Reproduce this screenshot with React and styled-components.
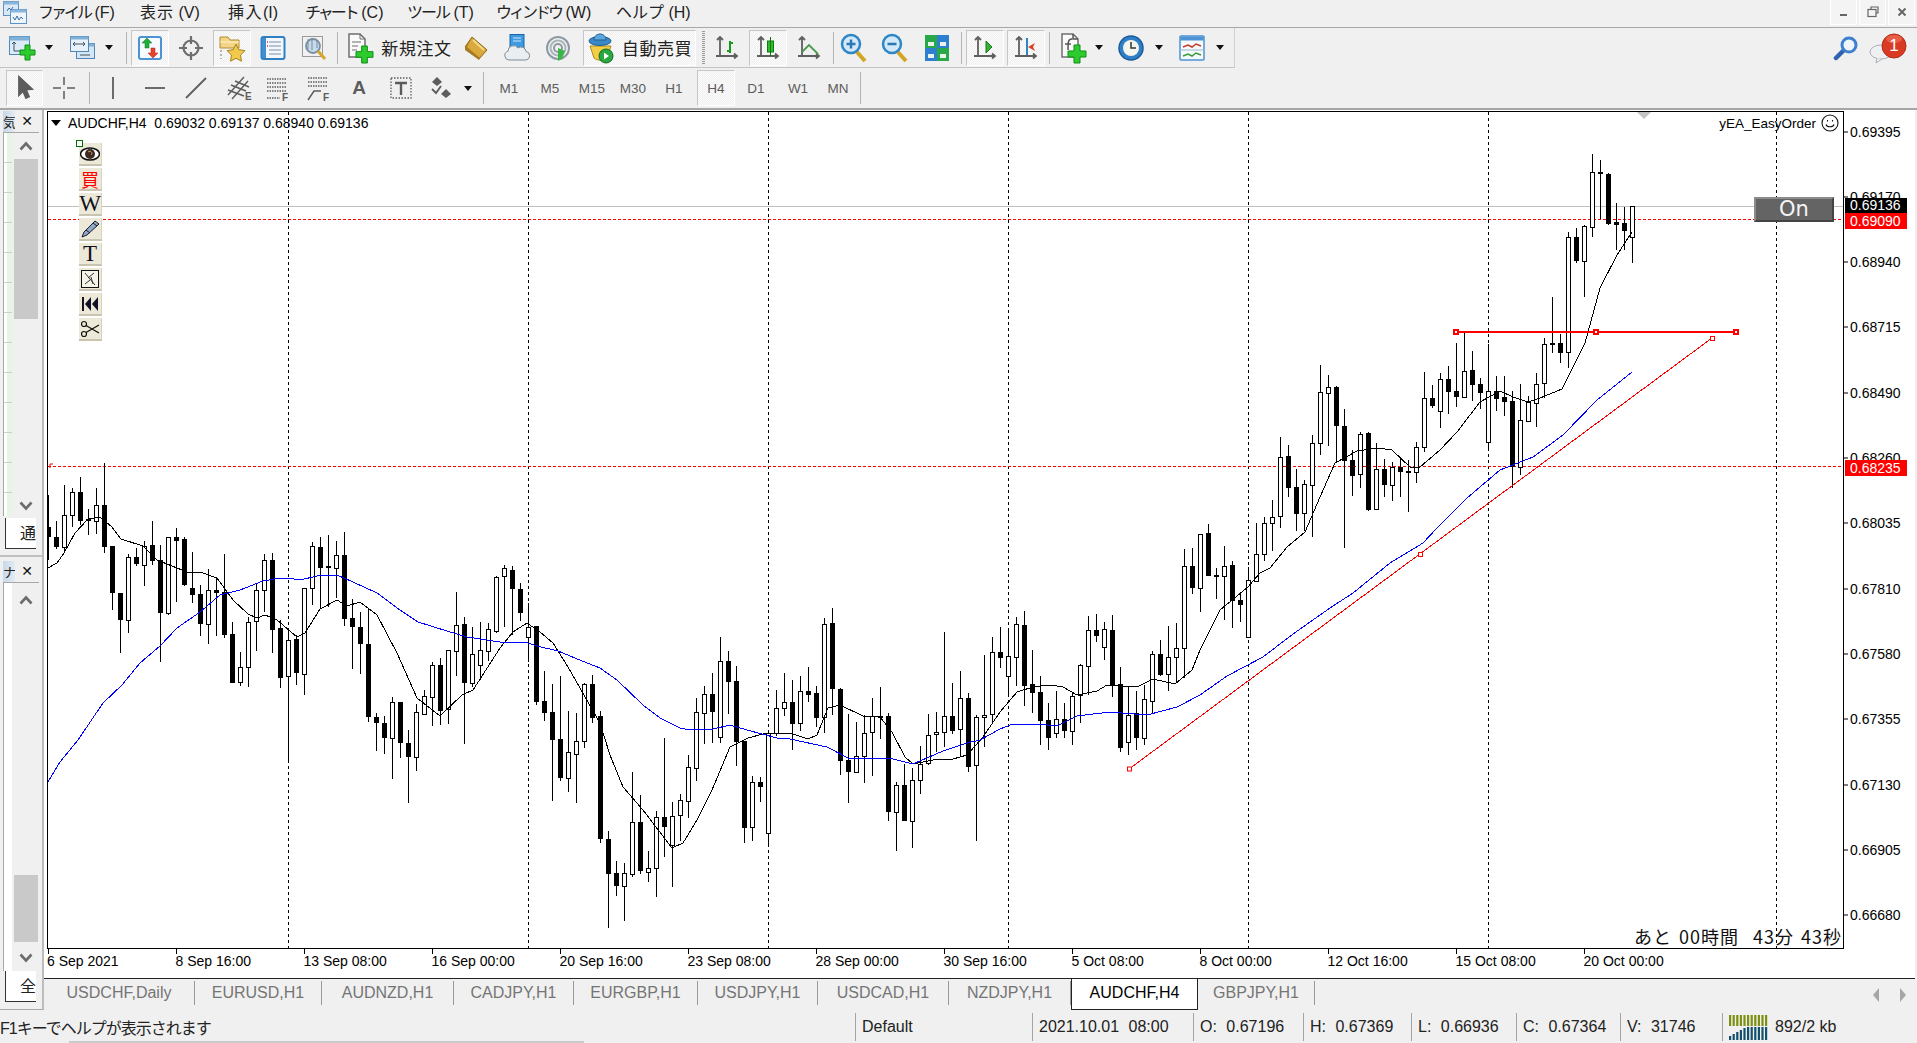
import React from 'react';
import styled, { createGlobalStyle } from 'styled-components';

const SANS = `"Liberation Sans", "Noto Sans CJK JP", sans-serif`;
const JP = `"Noto Sans CJK JP", "Liberation Sans", sans-serif`;

const GlobalStyle = createGlobalStyle`
  html, body { margin: 0; padding: 0; background: #f0f0f0; overflow: hidden; }
  * { box-sizing: border-box; }
`;

// hi, body top, body bottom, lo, white body
const CANDLES = [
  [495,527,537,560,0],[521,537,547,549,0],[485,515,547,553,1],[488,492,515,527,1],[477,492,521,525,0],
  [509,519,521,535,0],[488,505,521,534,1],[463,505,547,553,0],[546,546,593,610,0],[593,593,620,653,0],
  [554,557,620,633,1],[548,557,564,566,0],[541,546,565,586,1],[521,545,561,565,0],[545,560,613,662,0],
  [537,537,613,615,1],[528,537,541,602,0],[537,539,585,586,0],[552,588,595,603,0],[585,594,624,636,0],
  [569,590,624,644,1],[577,590,593,636,0],[554,592,635,638,0],[622,634,683,683,0],[652,667,682,686,1],
  [617,622,667,687,1],[583,590,621,651,1],[554,560,590,612,1],[553,560,630,653,0],[620,628,678,688,0],
  [630,640,676,763,1],[635,639,673,685,0],[588,588,674,695,1],[542,546,588,605,1],[537,547,568,609,0],
  [535,566,567,607,0],[541,555,568,598,1],[532,555,619,626,0],[599,618,627,669,0],[612,627,644,674,0],
  [608,644,717,722,0],[713,717,723,751,0],[716,723,738,754,0],[697,702,738,779,1],[702,702,743,758,0],
  [730,743,757,803,0],[704,712,757,771,1],[690,696,714,715,1],[662,665,697,726,1],[658,665,711,725,0],
  [650,650,709,724,1],[592,625,651,676,1],[617,624,683,744,0],[627,654,683,687,1],[622,650,665,680,1],
  [623,629,651,661,1],[576,577,631,633,1],[565,568,576,627,1],[566,570,589,635,0],[583,589,613,621,0],
  [603,627,637,662,1],[626,626,702,705,0],[671,701,713,721,0],[684,712,740,801,0],[676,739,778,781,0],
  [711,752,778,792,1],[713,741,754,803,1],[683,684,741,748,1],[675,684,718,723,0],[711,716,839,843,0],
  [831,839,874,928,0],[861,873,886,896,0],[863,873,886,921,1],[772,822,874,877,1],[795,822,871,874,0],
  [851,868,872,882,1],[811,817,868,897,1],[738,817,827,857,0],[802,816,845,887,1],[794,800,815,841,1],
  [755,767,801,818,1],[698,712,768,781,1],[686,694,713,744,1],[673,694,712,743,0],[637,661,737,743,1],
  [651,661,682,714,0],[666,681,742,766,0],[741,741,828,843,0],[776,782,827,841,1],[777,782,787,802,0],
  [732,733,833,846,1],[690,708,733,736,1],[673,702,708,716,1],[680,702,724,750,0],[676,691,723,731,1],
  [667,691,695,702,0],[686,693,718,727,0],[618,624,717,733,1],[608,623,689,715,0],[688,689,761,775,0],
  [714,760,772,803,0],[722,756,772,773,1],[715,733,756,783,1],[698,716,732,776,1],[687,716,717,739,0],
  [713,716,812,821,0],[782,785,812,851,1],[764,785,821,821,0],[768,780,821,848,1],[746,764,780,794,1],
  [714,735,763,765,1],[712,732,734,752,1],[632,716,732,747,1],[683,716,731,734,0],[671,698,729,757,1],
  [693,698,767,772,0],[715,717,765,841,1],[655,715,717,747,1],[637,652,714,724,1],[627,652,658,668,0],
  [628,656,676,696,1],[617,624,657,686,1],[611,625,686,706,0],[650,684,693,713,0],[676,692,721,745,0],
  [703,720,738,750,0],[691,719,733,738,1],[703,719,731,738,0],[692,696,731,745,1],[664,665,695,723,1],
  [616,630,666,695,1],[614,630,636,642,0],[622,629,647,660,1],[615,630,685,697,0],[667,684,748,752,0],
  [687,715,742,755,1],[691,713,738,750,0],[685,699,738,745,1],[651,654,701,713,1],[640,654,675,676,0],
  [626,657,674,691,1],[623,648,657,683,1],[549,566,648,678,1],[548,566,588,594,0],[534,534,588,612,1],
  [524,533,576,576,0],[568,575,576,599,0],[546,566,576,620,1],[561,565,601,628,0],[593,600,605,622,0],
  [567,580,637,637,1],[523,554,581,582,1],[517,523,554,561,1],[500,517,523,551,1],[437,457,516,528,1],
  [445,456,488,497,0],[469,487,514,531,0],[480,484,513,531,1],[435,443,485,537,1],[365,392,443,455,1],
  [375,387,393,446,1],[386,387,426,463,0],[409,426,461,548,0],[450,460,476,496,0],[432,434,474,488,1],
  [432,433,510,511,0],[443,469,509,510,1],[459,469,485,497,0],[462,467,485,501,1],[457,467,472,497,0],
  [460,471,472,512,0],[442,447,472,483,1],[372,398,447,452,1],[385,398,406,408,0],[373,379,411,428,1],
  [366,379,392,414,0],[343,391,397,407,0],[332,371,397,398,1],[351,370,385,401,0],[378,384,393,409,0],
  [344,391,442,449,1],[376,391,399,411,0],[376,397,402,416,0],[391,401,467,488,0],[384,420,467,475,1],
  [396,402,421,422,1],[373,384,403,427,1],[338,344,383,398,1],[297,343,345,353,0],[334,343,353,363,0],
  [232,237,352,368,1],[228,237,261,263,0],[225,226,261,297,1],[154,172,227,237,1],[160,172,174,219,0],
  [173,174,224,225,0],[203,222,225,250,0],[207,223,231,250,0],[206,206,237,263,1],
];

const MA_FAST = '48,568 57,563 64,553 75,533 88,519 100,517 112,527 121,539 143,546 157,560 177,568 187,572 200,572 217,578 233,600 248,614 257,618 265,615 277,620 297,637 305,633 320,609 337,600 347,606 360,602 377,615 397,653 417,698 440,716 462,695 473,690 500,648 513,632 527,623 540,632 553,643 568,667 580,688 600,723 610,755 623,787 643,810 672,848 683,843 697,820 712,790 730,747 748,738 767,733 793,734 808,739 817,735 828,708 840,705 863,716 880,717 892,732 905,757 913,764 933,760 953,759 967,755 983,737 1000,712 1017,692 1033,687 1050,685 1063,687 1077,695 1097,691 1107,685 1137,687 1153,679 1175,684 1192,670 1200,650 1220,610 1248,587 1260,573 1270,568 1287,547 1305,532 1320,497 1335,463 1357,451 1377,448 1392,450 1410,467 1420,467 1440,450 1457,432 1480,402 1500,391 1513,397 1528,402 1540,398 1562,389 1585,343 1600,288 1617,255 1632,232';
const MA_SLOW = '48,782 60,762 78,740 103,703 122,685 140,663 160,646 177,628 200,612 220,595 240,590 263,581 280,578 288,578 300,580 317,576 337,575 353,582 377,593 400,610 418,622 447,631 467,637 500,642 525,642 537,646 558,651 587,663 600,668 617,680 643,705 660,718 680,728 690,730 713,729 730,725 747,730 777,738 790,739 827,747 850,759 873,758 893,759 913,764 943,751 967,743 980,740 1000,729 1013,724 1037,724 1057,726 1077,716 1110,712 1147,715 1177,707 1200,695 1227,676 1263,657 1293,634 1330,608 1353,593 1390,563 1423,543 1437,528 1467,498 1500,470 1533,457 1563,435 1597,400 1632,372';

const PRICES = [
  ['0.69395', 132], ['0.69170', 197], ['0.68940', 262], ['0.68715', 327], ['0.68490', 393],
  ['0.68260', 458], ['0.68035', 523], ['0.67810', 589], ['0.67580', 654], ['0.67355', 719],
  ['0.67130', 785], ['0.66905', 850], ['0.66680', 915],
];
const TIMES = ['6 Sep 2021', '8 Sep 16:00', '13 Sep 08:00', '16 Sep 00:00', '20 Sep 16:00', '23 Sep 08:00', '28 Sep 00:00', '30 Sep 16:00', '5 Oct 08:00', '8 Oct 00:00', '12 Oct 16:00', '15 Oct 08:00', '20 Oct 00:00'];
const GRID = [288.5, 528.5, 768.5, 1008.5, 1248.5, 1488.5, 1776.5];
const TABS = [
  ['USDCHF,Daily', 151], ['EURUSD,H1', 127], ['AUDNZD,H1', 132], ['CADJPY,H1', 120], ['EURGBP,H1', 124],
  ['USDJPY,H1', 120], ['USDCAD,H1', 131], ['NZDJPY,H1', 122], ['AUDCHF,H4', 127, true], ['GBPJPY,H1', 117],
];
const STATUS = [
  ['Default', 177], ['2021.10.01 08:00', 161], ['O: 0.67196', 110], ['H: 0.67369', 108],
  ['L: 0.66936', 105], ['C: 0.67364', 104], ['V: 31746', 102],
];

const Page = styled.div`
  width: 1917px;
  height: 1043px;
  display: flex;
  flex-direction: column;
  background: #f0f0f0;
  font-family: ${SANS};
  color: #111;
  overflow: hidden;
`;

const MenuBar = styled.div`
  height: 28px;
  display: flex;
  align-items: flex-start;
  border-bottom: 1px solid #a8a8a8;
  padding-left: 2px;
`;

const Logo = styled.div`
  width: 24px;
  height: 24px;
  margin-right: 12px;
`;

const MenuItem = styled.div`
  height: 26px;
  width: ${(p) => p.$w}px;
  line-height: 26px;
  font-size: 16px;
  font-family: ${SANS};
  white-space: nowrap;
  color: #222;
`;

const MenuKana = styled.span`
  letter-spacing: ${(p) => p.$ls || 0}px;
`;

const WindowButtons = styled.div`
  margin-left: auto;
  margin-right: 2px;
  display: flex;
  gap: 2px;
`;

const WindowButton = styled.div`
  width: 27px;
  height: 25px;
  background: #f4f4f4;
  border: 1px solid #fff;
  border-top: none;
  display: flex;
  align-items: center;
  justify-content: center;
`;

const ToolRow = styled.div`
  height: 40px;
  display: flex;
`;

const ToolBar = styled.div`
  height: 40px;
  width: ${(p) => (p.$w ? `${p.$w}px` : 'auto')};
  display: flex;
  align-items: center;
  border-bottom: ${(p) => (p.$line ? '1px solid #c4c4c4' : 'none')};
  border-right: ${(p) => (p.$line ? '1px solid #d0d0d0' : 'none')};
`;

const ToolButton = styled.div`
  width: ${(p) => p.$w || 38}px;
  height: 36px;
  margin-left: ${(p) => p.$ml || 0}px;
  flex: none;
  display: flex;
  align-items: center;
  justify-content: center;
  gap: ${(p) => p.$gap || 0}px;
  border: 1px solid transparent;
  font-size: 13.5px;
  color: #5c5c5c;
  ${(p) => p.$active && `
    background: repeating-conic-gradient(#fbfbfb 0 25%, #f0f0f0 0 50%) 0 0 / 2px 2px;
    border-color: #c6c6c6 #fff #fff #c6c6c6;
  `}
`;

const ButtonText = styled.span`
  font-family: ${JP};
  font-size: 17px;
  letter-spacing: 0.6px;
  color: #222;
  white-space: nowrap;
`;

const ButtonGlyph = styled.span`
  font-size: 19px;
  font-weight: 700;
  color: #5c5c5c;
`;

const Caret = styled.div`
  width: ${(p) => p.$w || 20}px;
  margin-left: ${(p) => p.$ml || 0}px;
  flex: none;
  display: flex;
  justify-content: center;
  &::before {
    content: '';
    border-left: 4.5px solid transparent;
    border-right: 4.5px solid transparent;
    border-top: 5px solid #111;
  }
`;

const Divider = styled.div`
  width: 1px;
  height: 32px;
  flex: none;
  margin-left: ${(p) => p.$ml || 0}px;
  background: #b4b4b4;
`;

const Grip = styled.div`
  width: 3px;
  height: 34px;
  flex: none;
  margin-left: ${(p) => p.$ml || 0}px;
  background: repeating-linear-gradient(#9a9a9a 0 1px, transparent 1px 2px);
`;

const RightTools = styled.div`
  margin-left: auto;
  display: flex;
  align-items: center;
  gap: 10px;
  padding-right: 8px;
`;

const Main = styled.div`
  height: 902px;
  display: flex;
  border-top: 2px solid #a6a6a6;
`;

const Sidebar = styled.div`
  width: 44px;
  flex: none;
  display: flex;
  flex-direction: column;
  border-right: 2px solid #bcbcbc;
  border-bottom: 1px solid #a8a8a8;
`;

const Panel = styled.div`
  flex: ${(p) => (p.$grow ? '1' : 'none')};
  height: ${(p) => (p.$h ? `${p.$h}px` : 'auto')};
  display: flex;
  flex-direction: column;
  padding-bottom: ${(p) => p.$pb || 0}px;
  border-bottom: ${(p) => (p.$sep ? '2px solid #c0c0c0' : 'none')};
`;

const PanelHead = styled.div`
  height: 22px;
  flex: none;
  display: flex;
  align-items: center;
  padding-left: 3px;
  margin-top: ${(p) => p.$mt || 0}px;
`;

const PanelTitle = styled.div`
  width: 12px;
  height: 21px;
  overflow: hidden;
  background: linear-gradient(90deg, #c6d8ea, #e4ebf2);
  font-family: ${JP};
  font-size: 13px;
  line-height: 21px;
  color: #222;
`;

const PanelClose = styled.div`
  width: 24px;
  text-align: center;
  font-family: "DejaVu Sans", sans-serif;
  font-size: 14px;
  font-weight: 700;
  color: #111;
`;

const PanelBody = styled.div`
  flex: 1;
  min-height: 0;
  display: flex;
  margin-left: 3px;
  margin-right: 3px;
  border-top: 1px solid #a8a8a8;
  border-left: 1px solid #a8a8a8;
`;

const ListSliver = styled.div`
  width: 8px;
  flex: none;
  background-color: #fff;
  background-image: ${(p) => (p.$plain ? 'none' : `
    repeating-linear-gradient(transparent 0 29px, #c6d4c6 29px 30px),
    linear-gradient(90deg, #fff 0 3px, #e6f5e6 3px)
  `)};
`;

const ScrollColumn = styled.div`
  flex: 1;
  display: flex;
  flex-direction: column;
  align-items: center;
  min-width: 0;
`;

const Chevron = styled.div`
  width: 24px;
  height: 26px;
  flex: none;
  margin-top: ${(p) => p.$mt || 0}px;
  display: flex;
  align-items: center;
  justify-content: center;
`;

const ScrollThumb = styled.div`
  width: 24px;
  height: ${(p) => p.$h}px;
  flex: none;
  margin-top: ${(p) => p.$mt || 0}px;
  background: #c9c9c9;
`;

const PanelTab = styled.div`
  height: 31px;
  flex: none;
  margin: ${(p) => p.$mt || 0}px 6px 0 5px;
  background: #fff;
  border-left: 1px solid #333;
  border-bottom: 1px solid #333;
  text-align: right;
  font-family: ${JP};
  font-size: 16px;
  line-height: 28px;
  color: #222;
  overflow: hidden;
`;

const Workspace = styled.div`
  flex: 1;
  min-width: 0;
  display: flex;
  flex-direction: column;
`;

const ChartWrap = styled.div`
  height: 868px;
  position: relative;
  background: #fff;
  margin-right: 2px;
`;

const ChartSvg = styled.svg`
  display: block;
`;

const AxisText = styled.text`
  font-family: ${SANS};
  font-size: 14px;
  fill: ${(p) => p.$fill || '#000'};
`;

const Legend = styled.div`
  position: absolute;
  left: 7px;
  top: 5px;
  display: flex;
  align-items: center;
  gap: 7px;
  font-size: 14px;
  color: #000;
  white-space: pre;
  &::before {
    content: '';
    border-left: 5.5px solid transparent;
    border-right: 5.5px solid transparent;
    border-top: 6px solid #000;
  }
`;

const EaLabel = styled.div`
  position: absolute;
  right: 76px;
  top: 4px;
  display: flex;
  align-items: center;
  gap: 5px;
  font-size: 13.5px;
  color: #000;
`;

const OnButton = styled.div`
  position: absolute;
  left: 1710px;
  top: 87px;
  width: 80px;
  height: 25px;
  background: #646464;
  border: 2px solid;
  border-color: #8c8c8c #444 #444 #8c8c8c;
  color: #f4f4f4;
  font-family: "DejaVu Sans", sans-serif;
  font-size: 21px;
  line-height: 21px;
  text-align: center;
`;

const Countdown = styled.div`
  position: absolute;
  left: 1590px;
  top: 815px;
  font-family: ${JP};
  font-size: 18px;
  line-height: 22px;
  letter-spacing: 1px;
  word-spacing: 2px;
  color: #111;
  white-space: pre;
`;

const Palette = styled.div`
  position: absolute;
  left: 35px;
  top: 33px;
  display: flex;
  flex-direction: column;
  gap: 2px;
  &::before {
    content: '';
    position: absolute;
    left: -3px;
    top: -3px;
    width: 5px;
    height: 5px;
    border: 1px solid #007000;
    background: #fff;
  }
`;

const PaletteCell = styled.div`
  width: 23px;
  height: 23px;
  background: #ece9d8;
  border-bottom: 2px solid #c8c4b0;
  border-right: 1px solid #d8d4c2;
  display: flex;
  align-items: center;
  justify-content: center;
  font-family: ${(p) => (p.$jp ? JP : '"Liberation Serif", serif')};
  font-size: ${(p) => p.$size || 20}px;
  line-height: 1;
  color: ${(p) => p.$color || '#10101e'};
`;

const TabBar = styled.div`
  height: 32px;
  display: flex;
  align-items: stretch;
  border-top: 1px solid #222;
  background: #f0f0f0;
  margin-right: 2px;
`;

const ChartTab = styled.div`
  width: ${(p) => p.$w}px;
  flex: none;
  margin: ${(p) => (p.$active ? '0' : '2px 0 5px')};
  display: flex;
  align-items: center;
  justify-content: center;
  font-size: 16px;
  color: ${(p) => (p.$active ? '#000' : '#757575')};
  background: ${(p) => (p.$active ? '#fff' : 'transparent')};
  border-right: 1px solid ${(p) => (p.$active ? '#222' : '#9a9a9a')};
  border-left: ${(p) => (p.$active ? '1px solid #222' : 'none')};
  border-bottom: ${(p) => (p.$active ? '1px solid #222' : 'none')};
  padding-bottom: ${(p) => (p.$active ? '2px' : '0')};
`;

const TabArrows = styled.div`
  margin-left: auto;
  padding-right: 9px;
  display: flex;
  align-items: center;
  gap: 21px;
`;

const StatusBar = styled.div`
  flex: 1;
  display: flex;
  align-items: center;
  position: relative;
  font-size: 16px;
  color: #222;
  &::after {
    content: '';
    position: absolute;
    left: 69px;
    bottom: 0;
    width: 515px;
    height: 2px;
    background: #cacaca;
  }
`;

const StatusHint = styled.div`
  width: 855px;
  flex: none;
  font-family: ${SANS};
  letter-spacing: -1px;
  white-space: nowrap;
`;

const StatusCell = styled.div`
  width: ${(p) => p.$w}px;
  height: 28px;
  flex: none;
  display: flex;
  align-items: center;
  gap: 6px;
  padding-left: 6px;
  border-left: 1px solid #a4a4a4;
  word-spacing: ${(p) => p.$ws ?? 5}px;
  white-space: nowrap;
`;

const Axes = ({ children }) => (
  <svg width="26" height="26" viewBox="0 0 26 26">
    <path d="M6 3v18M2 21h21M3 5l3-3 3 3M20 18.500l3 2.500-3 2.500" fill="none" stroke="#5f5f5f" strokeWidth="1.800" />
    {children}
  </svg>
);

const PlusMark = ({ x = 14, y = 14, s = 12 }) => (
  <path
    d={`M${x + s / 3} ${y}h${s / 3}v${s / 3}h${s / 3}v${s / 3}h-${s / 3}v${s / 3}h-${s / 3}v-${s / 3}h-${s / 3}v-${s / 3}h${s / 3}z`}
    fill="#2ecb2e"
    stroke="#0b8f14"
    strokeWidth="1"
  />
);

const NewChartIcon = () => (
  <svg width="28" height="28" viewBox="0 0 28 28">
    <rect x="1.500" y="2.500" width="20" height="18" fill="#dcebf7" stroke="#4f88b8" />
    <rect x="1.500" y="2.500" width="20" height="4" fill="#7fb0d8" />
    <path d="M6 8v9h9M6 8l-2 2M6 8l2 2" stroke="#405060" fill="none" />
    <PlusMark x={12} y={11} s={15} />
  </svg>
);

const ProfileIcon = () => (
  <svg width="28" height="28" viewBox="0 0 28 28">
    <rect x="8.500" y="9.500" width="18" height="15" fill="#d4e5f3" stroke="#4f88b8" />
    <rect x="8.500" y="9.500" width="18" height="3" fill="#7fb0d8" />
    <rect x="2.500" y="2.500" width="18" height="15" fill="#e8f1f9" stroke="#4f88b8" />
    <rect x="2.500" y="2.500" width="18" height="3" fill="#7fb0d8" />
    <path d="M5 10h12M7 8l-2 2 2 2M15 8l2 2-2 2M12 21h10" stroke="#405060" fill="none" />
  </svg>
);

const MarketIcon = () => (
  <svg width="26" height="26" viewBox="0 0 26 26">
    <rect x="2" y="2" width="22" height="22" rx="2" fill="#f7fbff" stroke="#4d93d3" strokeWidth="2" />
    <path d="M10 3l5 5h-3v5H8V8H5z" fill="#1fae3a" stroke="#0c7a20" strokeWidth=".5" />
    <path d="M16 23l-5-5h3v-5h4v5h3z" fill="#e8402a" stroke="#a82a18" strokeWidth=".5" />
  </svg>
);

const CrosshairIcon = () => (
  <svg width="26" height="26" viewBox="0 0 26 26" fill="none" stroke="#6e6e6e" strokeWidth="2.200">
    <circle cx="13" cy="13" r="7.500" />
    <path d="M13 1v8M13 17v8M1 13h8M17 13h8" />
  </svg>
);

const NavigatorIcon = () => (
  <svg width="28" height="28" viewBox="0 0 28 28">
    <path d="M2 3h8l2 3h9v8H2z" fill="#f3d488" stroke="#b08c30" />
    <path d="M2 8h19" stroke="#fff4c8" />
    <path d="M3 16v9" stroke="#777" strokeDasharray="2 2" />
    <path d="M18 10l2.800 5.700 6.200.9-4.500 4.400 1 6.200-5.500-2.900-5.500 2.900 1-6.200L9 16.600l6.200-.9z" fill="#f2c94a" stroke="#a2831e" />
  </svg>
);

const TerminalIcon = () => (
  <svg width="26" height="28" viewBox="0 0 26 28">
    <rect x="1.500" y="3" width="23" height="22" rx="2" fill="#f4f8fc" stroke="#2f7fc4" strokeWidth="2" />
    <rect x="2" y="4" width="4" height="20" fill="#3f8fd0" />
    <path d="M9 8h12M9 12h12M9 16h12M9 20h12" stroke="#7d8fa3" />
    <path d="M7 8h1M7 12h1" stroke="#d33" strokeWidth="1.500" />
  </svg>
);

const TesterIcon = () => (
  <svg width="28" height="28" viewBox="0 0 28 28">
    <rect x="2.500" y="2.500" width="20" height="20" fill="#f1f1f1" stroke="#9a9a9a" />
    <circle cx="13" cy="12" r="7" fill="#c6dcee" stroke="#7b8fa3" strokeWidth="1.800" />
    <path d="M8 5v10M12 4v12M17 6v8" stroke="#7b8896" />
    <path d="M18 17l7 8" stroke="#d9a52a" strokeWidth="3" />
  </svg>
);

const OrderIcon = () => (
  <svg width="28" height="32" viewBox="0 0 28 32">
    <path d="M3 2h11l5 5v18H3z" fill="#fafafa" stroke="#6f6f6f" strokeWidth="1.500" />
    <path d="M14 2v5h5M6 10h9M6 14h6M6 18h5" stroke="#6f6f6f" fill="none" />
    <PlusMark x={10} y={14} s={17} />
  </svg>
);

const BookIcon = () => (
  <svg width="28" height="28" viewBox="0 0 28 28">
    <path d="M10 3l15 13-8 9L3 13z" fill="#d9a93b" stroke="#8a6717" />
    <path d="M10 3L3 13v3l14 10 1-2L5 13z" fill="#a87c24" />
    <path d="M11 6l11 10" stroke="#f2d888" strokeWidth="2" />
  </svg>
);

const CloudIcon = () => (
  <svg width="28" height="30" viewBox="0 0 28 30">
    <rect x="7" y="1.500" width="14" height="18" fill="#3d9ae0" stroke="#1a65a8" />
    <path d="M10 5h8M10 8h8" stroke="#cfe8fb" />
    <path d="M6 27a4.500 4.500 0 0 1-1-8.800A5.500 5.500 0 0 1 15 15a5 5 0 0 1 8 3.500A4.300 4.300 0 0 1 23 27z" fill="#e9eef2" stroke="#7f8d99" />
  </svg>
);

const SignalIcon = () => (
  <svg width="26" height="30" viewBox="0 0 26 30" fill="none">
    <circle cx="13" cy="15" r="11" stroke="#8d9aa3" strokeWidth="2" />
    <circle cx="13" cy="15" r="7.500" stroke="#a9b4bb" strokeWidth="2" />
    <circle cx="13" cy="15" r="4" stroke="#8d9aa3" strokeWidth="2" />
    <path d="M13 15l7 3-3 8-4 2z" fill="#3db54a" />
  </svg>
);

const AutoIcon = () => (
  <svg width="28" height="32" viewBox="0 0 28 32">
    <path d="M3 14l4 12c4 3 9 3 13 0l4-12z" fill="#f3cd45" stroke="#a98a1c" />
    <ellipse cx="13" cy="9" rx="11" ry="4.500" fill="#3b88c6" stroke="#1f5f95" />
    <path d="M7 8c0-8 12-8 12 0z" fill="#5da7dd" stroke="#1f5f95" />
    <circle cx="19" cy="24" r="7" fill="#28a83e" stroke="#0f6d24" />
    <path d="M17 20.500v7l5-3.500z" fill="#fff" />
  </svg>
);

const BarsIcon = () => (
  <Axes>
    <path d="M16 6v12M13 16h3M16 8h3" stroke="#1a9a1a" strokeWidth="2" fill="none" />
  </Axes>
);

const CandlesIcon = () => (
  <Axes>
    <rect x="12.500" y="6" width="6" height="11" fill="#2fbd2f" stroke="#0c7a10" />
    <path d="M15.500 2v19" stroke="#0c7a10" />
  </Axes>
);

const LineIcon = () => (
  <Axes>
    <path d="M6 17l7-7 9 9" fill="none" stroke="#4d9a4d" strokeWidth="1.800" />
  </Axes>
);

const ZoomIcon = ({ minus }) => (
  <svg width="28" height="30" viewBox="0 0 28 30">
    <path d="M16 18l9 10" stroke="#d2a525" strokeWidth="4" />
    <circle cx="11" cy="11" r="9" fill="#d3e9f8" stroke="#2f86c6" strokeWidth="2.500" />
    <path d={minus ? 'M6.500 11h9' : 'M6.500 11h9M11 6.500v9'} stroke="#2b78b4" strokeWidth="2.500" />
  </svg>
);

const TileIcon = () => (
  <svg width="26" height="30" viewBox="0 0 26 30">
    <rect x="1" y="2" width="12" height="13" fill="#29a84a" />
    <rect x="13" y="2" width="12" height="13" fill="#2f7fd0" />
    <rect x="1" y="15" width="12" height="13" fill="#2f7fd0" />
    <rect x="13" y="15" width="12" height="13" fill="#29a84a" />
    <path d="M4 9h6v4H4zM16 9h6v4h-6zM4 21h6v4H4zM16 21h6v4h-6z" fill="#eaf3ea" />
  </svg>
);

const ScrollIcon = () => (
  <Axes>
    <path d="M14 6l6 6-6 6z" fill="#37b137" stroke="#157a15" />
  </Axes>
);

const ShiftIcon = () => (
  <Axes>
    <path d="M14 3v17" stroke="#2f86c6" strokeWidth="2" />
    <path d="M15 12l7-4-2 4 2 4z" fill="#d9401f" />
  </Axes>
);

const IndicatorIcon = () => (
  <svg width="28" height="32" viewBox="0 0 28 32">
    <path d="M3 2h11l5 5v18H3z" fill="#fafafa" stroke="#6f6f6f" strokeWidth="1.500" />
    <path d="M14 2v5h5M9 18c0-8 0-11 4-11M6 12h6" stroke="#555" fill="none" strokeWidth="1.500" />
    <PlusMark x={9} y={13} s={18} />
  </svg>
);

const ClockIcon = () => (
  <svg width="28" height="30" viewBox="0 0 28 30">
    <circle cx="14" cy="15" r="12" fill="#2f7fc8" stroke="#1a5c9a" strokeWidth="1.500" />
    <circle cx="14" cy="15" r="8" fill="#f5f5ee" />
    <path d="M14 9v6h5" stroke="#333" strokeWidth="1.500" fill="none" />
  </svg>
);

const TemplateIcon = () => (
  <svg width="28" height="30" viewBox="0 0 28 30">
    <rect x="2" y="3" width="24" height="24" rx="1" fill="#f5f9fc" stroke="#4d93d3" strokeWidth="1.500" />
    <rect x="2.500" y="3.500" width="23" height="4" fill="#4d93d3" />
    <path d="M5 14l5-2 4 2 4-3 5 2" stroke="#c43b2a" fill="none" strokeWidth="1.500" />
    <path d="M2 17h24" stroke="#9ab8d0" />
    <path d="M5 23l5-2 4 2 4-3 5 2" stroke="#3a9a3a" fill="none" strokeWidth="1.500" />
  </svg>
);

const DrawIcon = ({ children, w = 28 }) => (
  <svg width={w} height="28" viewBox={`0 0 ${w} 28`} fill="none" stroke="#5c5c5c" strokeWidth="1.800">
    {children}
  </svg>
);

const SmallMark = styled.text`
  font-family: ${SANS};
  font-size: 10px;
  font-weight: 700;
  fill: #5c5c5c;
  stroke: none;
`;

const MenuLogo = () => (
  <svg width="26" height="26" viewBox="0 0 26 26">
    <rect x="1.500" y="1.500" width="15" height="14" fill="#dbe9f6" stroke="#5a93c8" />
    <rect x="1.500" y="1.500" width="15" height="3" fill="#88b6dc" />
    <rect x="8.500" y="9.500" width="16" height="14" fill="#eef5fb" stroke="#5a93c8" />
    <rect x="8.500" y="9.500" width="16" height="3" fill="#88b6dc" />
    <path d="M11 17l2 3 2-4 2 4 2-3 2 2" stroke="#3a6ea5" fill="none" />
    <path d="M5 11l2-3 2 2 2-3" stroke="#3a6ea5" fill="none" />
  </svg>
);

const Smile = () => (
  <svg width="18" height="18" viewBox="0 0 18 18" fill="none" stroke="#111" strokeWidth="1.100">
    <circle cx="9" cy="9" r="8" />
    <path d="M5 10.500c1 3 7 3 8 0" />
    <path d="M6.500 6v1.500M11.500 6v1.500" />
  </svg>
);

const NotifyIcon = () => (
  <svg width="40" height="32" viewBox="0 0 40 32">
    <ellipse cx="12" cy="20" rx="11" ry="7" fill="#eef0f2" stroke="#aab0b5" />
    <path d="M8 26l-1 5 6-4" fill="#eef0f2" stroke="#aab0b5" />
    <circle cx="25" cy="14" r="12" fill="#d93a24" stroke="#b52c19" />
    <ellipse cx="25" cy="7" rx="8" ry="4" fill="#ef6d56" opacity=".7" />
  </svg>
);

const NotifyWrap = styled.div`
  position: relative;
  height: 32px;
`;

const NotifyCount = styled.span`
  position: absolute;
  left: 19px;
  top: 4px;
  width: 12px;
  text-align: center;
  font-size: 17px;
  line-height: 20px;
  color: #fff;
`;

const Candle = ({ i, c }) => {
  const col = 48 + 8 * i;
  const [hi, top, bot, lo, white] = c;
  return (
    <g>
      <rect x={col} y={hi} width="1" height={lo - hi} fill="#000" />
      {white ? (
        <rect x={col - 1.5} y={top + 0.5} width="4" height={Math.max(bot - top, 1)} fill="#fff" stroke="#000" />
      ) : (
        <rect x={col - 2} y={top} width="5" height={Math.max(bot - top, 2)} fill="#000" />
      )}
    </g>
  );
};

const Handle = ({ x, y, s = 5, w = 1 }) => (
  <rect x={x - s / 2} y={y - s / 2} width={s} height={s} fill="#fff" stroke="#f00" strokeWidth={w} />
);

const PriceChart = () => (
  <ChartSvg width="1871" height="868" viewBox="44 110 1871 868">
    <defs>
      <clipPath id="plot">
        <rect x="48" y="112" width="1795" height="837" />
      </clipPath>
    </defs>
    <g clipPath="url(#plot)">
      {GRID.map((x) => (
        <line key={x} x1={x} x2={x} y1="112" y2="949" stroke="#000" strokeDasharray="3 3" shapeRendering="crispEdges" />
      ))}
      <line x1="48" x2="1843" y1="206.500" y2="206.500" stroke="#c0c0c0" />
      <line x1="48" x2="1843" y1="219.500" y2="219.500" stroke="#f00" strokeDasharray="3 2" shapeRendering="crispEdges" />
      <line x1="48" x2="1843" y1="466.500" y2="466.500" stroke="#f00" strokeDasharray="3 2" shapeRendering="crispEdges" />
      <g shapeRendering="crispEdges">
        {CANDLES.map((c, i) => (
          <Candle key={i} i={i} c={c} />
        ))}
        <polyline points={MA_FAST} fill="none" stroke="#000" strokeWidth="1" />
        <polyline points={MA_SLOW} fill="none" stroke="#0000ff" strokeWidth="1" />
        <line x1="1129" y1="769" x2="1712" y2="338" stroke="#f00" />
      </g>
      <Handle x={1129.5} y={769} s={4} />
      <Handle x={1420.5} y={554.500} s={4} />
      <Handle x={1712.5} y={338.500} s={4} />
      <line x1="1456" x2="1736" y1="332" y2="332" stroke="#f00" strokeWidth="2" />
      <Handle x={1456} y={332} s={4} w={2} />
      <Handle x={1596} y={332} s={4} w={2} />
      <Handle x={1736} y={332} s={4} w={2} />
      <path d="M50 468v-4h3" stroke="#f00" fill="none" />
      <path d="M1637 112h14l-7 7z" fill="#c4c4c4" />
    </g>
    <rect x="47.500" y="111.500" width="1796" height="837" fill="none" stroke="#000" />
    {PRICES.map(([label, y]) => (
      <g key={label}>
        <line x1="1844" x2="1848" y1={y} y2={y} stroke="#000" />
        <AxisText x="1850" y={y + 5}>{label}</AxisText>
      </g>
    ))}
    {TIMES.map((label, i) => (
      <g key={label}>
        <line x1={48.5 + i * 128} x2={48.5 + i * 128} y1="949" y2="954" stroke="#000" />
        <AxisText x={i === 0 ? 47 : 47.5 + i * 128} y="966">{label}</AxisText>
      </g>
    ))}
    <rect x="1845" y="198" width="62" height="15" fill="#000" />
    <rect x="1845" y="213" width="62" height="16" fill="#f00" />
    <rect x="1845" y="460" width="62" height="16" fill="#f00" />
    <AxisText x="1850" y="210" $fill="#fff">0.69136</AxisText>
    <AxisText x="1850" y="226" $fill="#fff">0.69090</AxisText>
    <AxisText x="1850" y="473" $fill="#fff">0.68235</AxisText>
  </ChartSvg>
);

const PaletteIcon = ({ children }) => (
  <svg width="20" height="20" viewBox="0 0 20 20">{children}</svg>
);

const ToolPalette = () => (
  <Palette>
    <PaletteCell>
      <PaletteIcon>
        <ellipse cx="10" cy="10" rx="9.500" ry="6" fill="#fff" stroke="#111" strokeWidth="1.500" />
        <circle cx="10" cy="10" r="5" fill="#3a2a20" />
        <path d="M8 8c3-2 5 1 3 3" stroke="#c8a070" fill="none" />
      </PaletteIcon>
    </PaletteCell>
    <PaletteCell $jp $color="#f00" $size={18}>買</PaletteCell>
    <PaletteCell $size={23}>W</PaletteCell>
    <PaletteCell>
      <PaletteIcon>
        <path d="M2 18l2-5L15 2l4 3L7 16z" fill="#8fa8c8" stroke="#1a1a2a" />
        <path d="M6 11l4 3M13 4l4 3" stroke="#1a1a2a" />
      </PaletteIcon>
    </PaletteCell>
    <PaletteCell $size={23}>T</PaletteCell>
    <PaletteCell>
      <PaletteIcon>
        <rect x="1.500" y="1.500" width="17" height="17" fill="#f6f4e8" stroke="#111" />
        <path d="M5 4l10 12M14 4L8 9M5 15l5-4M11 8l2 7" stroke="#333" />
      </PaletteIcon>
    </PaletteCell>
    <PaletteCell>
      <PaletteIcon>
        <path d="M2 3h2v14H2z" fill="#1a1020" />
        <path d="M11 3v14L5 10zM18 3v14l-6-7z" fill="#101026" />
      </PaletteIcon>
    </PaletteCell>
    <PaletteCell>
      <PaletteIcon>
        <circle cx="4" cy="5" r="2.500" fill="none" stroke="#111" strokeWidth="1.200" />
        <circle cx="4" cy="15" r="2.500" fill="none" stroke="#111" strokeWidth="1.200" />
        <path d="M6 6.500L19 14M6 13.500L19 6" stroke="#111" strokeWidth="1.300" />
      </PaletteIcon>
    </PaletteCell>
  </Palette>
);

const ChevronIcon = ({ up }) => (
  <svg width="14" height="10" viewBox="0 0 14 10" fill="none" stroke="#6c6c6c" strokeWidth="2.600">
    <path d={up ? 'M1.500 8.500L7 2.500l5.500 6' : 'M1.500 1.500L7 7.500l5.500-6'} />
  </svg>
);

const Left = () => (
  <Sidebar>
    <Panel $h={447} $sep $pb={6}>
      <PanelHead>
        <PanelTitle>気</PanelTitle>
        <PanelClose>✕</PanelClose>
      </PanelHead>
      <PanelBody>
        <ListSliver />
        <ScrollColumn>
          <Chevron><ChevronIcon up /></Chevron>
          <ScrollThumb $h={160} />
          <Chevron $mt={174}><ChevronIcon /></Chevron>
        </ScrollColumn>
      </PanelBody>
      <PanelTab $mt={2}>通</PanelTab>
    </Panel>
    <Panel $grow $pb={7}>
      <PanelHead $mt={3}>
        <PanelTitle>ナ</PanelTitle>
        <PanelClose>✕</PanelClose>
      </PanelHead>
      <PanelBody>
        <ListSliver $plain />
        <ScrollColumn>
          <Chevron $mt={4}><ChevronIcon up /></Chevron>
          <ScrollThumb $h={67} $mt={262} />
          <Chevron $mt={3}><ChevronIcon /></Chevron>
        </ScrollColumn>
      </PanelBody>
      <PanelTab>全</PanelTab>
    </Panel>
  </Sidebar>
);

export default function App() {
  return (
    <Page>
      <GlobalStyle />
      <MenuBar>
        <Logo><MenuLogo /></Logo>
        <MenuItem $w={102}><MenuKana $ls={-3}>ファイル</MenuKana> (F)</MenuItem>
        <MenuItem $w={88}><MenuKana $ls={1}>表示</MenuKana> (V)</MenuItem>
        <MenuItem $w={77}><MenuKana $ls={1.500}>挿入</MenuKana>(I)</MenuItem>
        <MenuItem $w={102}><MenuKana $ls={-3}>チャート</MenuKana> (C)</MenuItem>
        <MenuItem $w={89}><MenuKana $ls={-2}>ツール</MenuKana> (T)</MenuItem>
        <MenuItem $w={120}><MenuKana $ls={-3}>ウィンドウ</MenuKana> (W)</MenuItem>
        <MenuItem $w={80}>ヘルプ (H)</MenuItem>
        <WindowButtons>
          <WindowButton>
            <svg width="10" height="10" viewBox="0 0 10 10"><path d="M1 8h7" stroke="#666" strokeWidth="2" /></svg>
          </WindowButton>
          <WindowButton>
            <svg width="12" height="12" viewBox="0 0 12 12" fill="none" stroke="#666" strokeWidth="1.200">
              <path d="M4 3V1h7v6H9" />
              <rect x="1" y="3.500" width="8" height="7" />
            </svg>
          </WindowButton>
          <WindowButton>
            <svg width="10" height="10" viewBox="0 0 10 10"><path d="M1.500 1.500l7 7M8.500 1.500l-7 7" stroke="#666" strokeWidth="2" /></svg>
          </WindowButton>
        </WindowButtons>
      </MenuBar>

      <ToolRow>
        <ToolBar $w={1235} $line>
          <ToolButton $w={34} $ml={5}><NewChartIcon /></ToolButton>
          <Caret />
          <ToolButton $w={34} $ml={6}><ProfileIcon /></ToolButton>
          <Caret />
          <Divider $ml={7} />
          <ToolButton $ml={4} $active><MarketIcon /></ToolButton>
          <ToolButton $ml={3}><CrosshairIcon /></ToolButton>
          <ToolButton $ml={3} $active><NavigatorIcon /></ToolButton>
          <ToolButton $ml={3}><TerminalIcon /></ToolButton>
          <ToolButton $ml={3}><TesterIcon /></ToolButton>
          <Divider $ml={4} />
          <ToolButton $w={110} $ml={6} $gap={7}><OrderIcon /><ButtonText>新規注文</ButtonText></ToolButton>
          <ToolButton $ml={3}><BookIcon /></ToolButton>
          <ToolButton $ml={3}><CloudIcon /></ToolButton>
          <ToolButton $ml={3}><SignalIcon /></ToolButton>
          <ToolButton $w={113} $ml={6} $gap={7} $active><AutoIcon /><ButtonText>自動売買</ButtonText></ToolButton>
          <Grip $ml={6} />
          <ToolButton $ml={3}><BarsIcon /></ToolButton>
          <ToolButton $ml={3} $active><CandlesIcon /></ToolButton>
          <ToolButton $ml={3}><LineIcon /></ToolButton>
          <Divider $ml={5} />
          <ToolButton $ml={1}><ZoomIcon /></ToolButton>
          <ToolButton $ml={3}><ZoomIcon minus /></ToolButton>
          <ToolButton $ml={4}><TileIcon /></ToolButton>
          <Divider $ml={5} />
          <ToolButton $ml={4} $active><ScrollIcon /></ToolButton>
          <ToolButton $ml={3} $active><ShiftIcon /></ToolButton>
          <Divider $ml={4} />
          <ToolButton $ml={4}><IndicatorIcon /></ToolButton>
          <Caret $w={14} />
          <ToolButton $ml={6}><ClockIcon /></ToolButton>
          <Caret $w={14} $ml={2} />
          <ToolButton $ml={7}><TemplateIcon /></ToolButton>
          <Caret $w={14} $ml={2} />
        </ToolBar>
        <RightTools>
          <svg width="26" height="26" viewBox="0 0 26 26">
            <path d="M11 15l-8 8" stroke="#2c62b0" strokeWidth="4.500" strokeLinecap="round" />
            <circle cx="16" cy="10" r="7" fill="#eef5fc" stroke="#3f7fcf" strokeWidth="3" />
          </svg>
          <NotifyWrap>
            <NotifyIcon />
            <NotifyCount>1</NotifyCount>
          </NotifyWrap>
        </RightTools>
      </ToolRow>

      <ToolRow>
        <ToolBar>
          <ToolButton $w={37} $ml={6} $active>
            <DrawIcon><path d="M8 3l13 12-6 .5 3 7-3 1.500-3-7-4 4z" fill="#5c5c5c" /></DrawIcon>
          </ToolButton>
          <ToolButton $ml={2}>
            <DrawIcon><path d="M14 3v8M14 17v8M3 14h8M17 14h8" strokeWidth="1.500" /></DrawIcon>
          </ToolButton>
          <Divider $ml={6} />
          <ToolButton $ml={4}><DrawIcon><path d="M14 3v22" /></DrawIcon></ToolButton>
          <ToolButton $ml={4}><DrawIcon><path d="M4 14h20" /></DrawIcon></ToolButton>
          <ToolButton $ml={3}><DrawIcon><path d="M4 24L24 4" /></DrawIcon></ToolButton>
          <ToolButton $ml={5}>
            <DrawIcon>
              <path d="M3 21L19 3M7 25L23 7M3 16l16 6M6 11l15 6M10 7l14 6" strokeWidth="1.400" />
              <SmallMark x="20" y="26">E</SmallMark>
            </DrawIcon>
          </ToolButton>
          <ToolButton>
            <DrawIcon>
              <path d="M4 5h20M4 9h20M4 13h20M4 17h20M4 24h13" strokeDasharray="1.500 1" strokeWidth="1.500" />
              <SmallMark x="19" y="27">F</SmallMark>
            </DrawIcon>
          </ToolButton>
          <ToolButton $ml={3}>
            <DrawIcon>
              <path d="M4 4h20M4 8h20M4 12h20" strokeDasharray="1.500 1" strokeWidth="1.500" />
              <path d="M4 26l6-9 7 0" strokeWidth="1.500" />
              <SmallMark x="19" y="27">F</SmallMark>
            </DrawIcon>
          </ToolButton>
          <ToolButton $ml={3}><ButtonGlyph>A</ButtonGlyph></ToolButton>
          <ToolButton $ml={4}>
            <DrawIcon>
              <rect x="4" y="4" width="20" height="20" strokeDasharray="1.500 1.500" strokeWidth="1.300" />
              <path d="M8 9h12M14 9v12" strokeWidth="2.400" />
            </DrawIcon>
          </ToolButton>
          <ToolButton $w={36} $ml={4}>
            <DrawIcon>
              <path d="M9 3l5 5-5 4-5-4z" fill="#5c5c5c" stroke="none" />
              <path d="M18 15l5 5-5 4-5-4z" fill="#5c5c5c" stroke="none" />
              <path d="M4 15l4 4 5-7" strokeWidth="1.800" />
            </DrawIcon>
          </ToolButton>
          <Caret $w={14} $ml={1} />
          <Divider $ml={8} />
          <ToolButton $ml={6}>M1</ToolButton>
          <ToolButton $ml={3}>M5</ToolButton>
          <ToolButton $ml={4}>M15</ToolButton>
          <ToolButton $ml={3}>M30</ToolButton>
          <ToolButton $ml={3}>H1</ToolButton>
          <ToolButton $ml={4} $active>H4</ToolButton>
          <ToolButton $ml={2}>D1</ToolButton>
          <ToolButton $ml={4}>W1</ToolButton>
          <ToolButton $ml={2}>MN</ToolButton>
          <Divider $ml={3} />
        </ToolBar>
      </ToolRow>

      <Main>
        <Left />
        <Workspace>
          <ChartWrap>
            <PriceChart />
            <Legend>{'AUDCHF,H4  0.69032 0.69137 0.68940 0.69136'}</Legend>
            <EaLabel>yEA_EasyOrder <Smile /></EaLabel>
            <ToolPalette />
            <OnButton>On</OnButton>
            <Countdown>{'あと 00時間  43分 43秒'}</Countdown>
          </ChartWrap>
          <TabBar>
            {TABS.map(([name, w, active]) => (
              <ChartTab key={name} $w={w} $active={active}>{name}</ChartTab>
            ))}
            <TabArrows>
              <svg width="6" height="14" viewBox="0 0 6 14"><path d="M6 0v14L0 7z" fill="#a6a6a6" /></svg>
              <svg width="6" height="14" viewBox="0 0 6 14"><path d="M0 0v14l6-7z" fill="#a6a6a6" /></svg>
            </TabArrows>
          </TabBar>
        </Workspace>
      </Main>

      <StatusBar>
        <StatusHint>F1キーでヘルプが表示されます</StatusHint>
        {STATUS.map(([text, w]) => (
          <StatusCell key={text} $w={w} $ws={text === 'Default' ? 0 : 5}>{text}</StatusCell>
        ))}
        <StatusCell $w={190} $ws={0}>
          <svg width="40" height="28" viewBox="0 0 40 28">
            {Array.from({ length: 11 }, (_, i) => (
              <g key={i}>
                <rect x={i * 3.6} y={2} width="2.200" height="11" fill="#7e8f12" />
                <rect x={i * 3.6} y={Math.max(23 - i * 2, 14)} width="2.200" height={27 - Math.max(23 - i * 2, 14)} fill="#12506e" />
              </g>
            ))}
          </svg>
          892/2 kb
        </StatusCell>
      </StatusBar>
    </Page>
  );
}
